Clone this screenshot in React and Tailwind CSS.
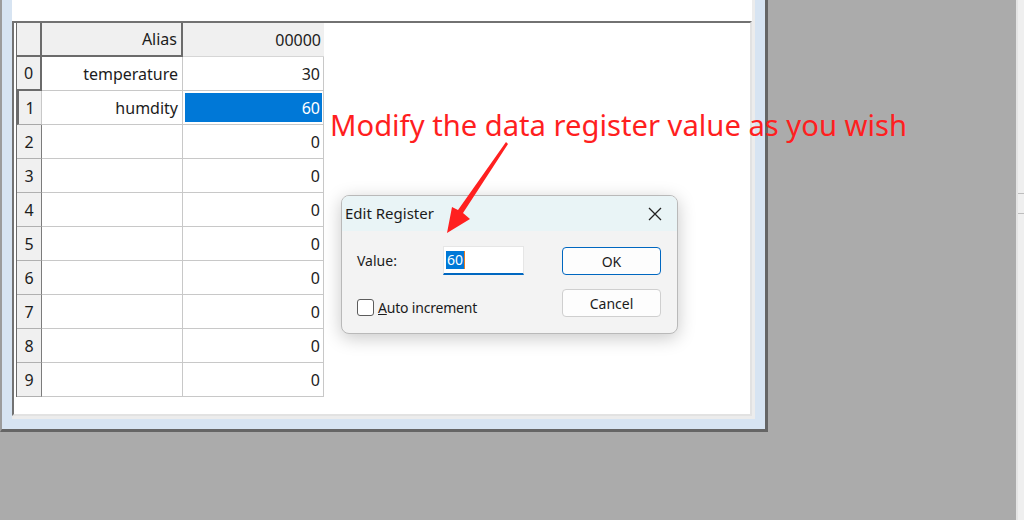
const rows = [
  { alias: "temperature", value: "30" },
  { alias: "humdity", value: "60", selected: true },
  { alias: "", value: "0" },
  { alias: "", value: "0" },
  { alias: "", value: "0" },
  { alias: "", value: "0" },
  { alias: "", value: "0" },
  { alias: "", value: "0" },
  { alias: "", value: "0" },
  { alias: "", value: "0" },
];

function RowHeader({ index }) {
  if (index === 0) {
    return (
      <div className="w-[25px] h-full flex items-center justify-center bg-[#f0f0f0] border-r-2 border-b-2 border-[#6b6b6b]">
        {index}
      </div>
    );
  }
  if (index === 1) {
    return (
      <div className="w-[25px] h-full flex items-center justify-center bg-[#f0f0f0] border-l-2 border-[#6b6b6b] border-r border-r-[#c8c8c8] border-b border-b-[#a8a8a8]">
        {index}
      </div>
    );
  }
  return (
    <div className="w-[25px] h-full flex items-center justify-center bg-[#f0f0f0] border-r border-r-[#7c7c7c] border-b border-b-[#b0b0b0]">
      {index}
    </div>
  );
}

function Grid() {
  return (
    <div className="w-[308px] border-l border-[#6b6b6b] text-[16px] text-[#1c1c1c]">
      <div className="flex h-[34px]">
        <div className="w-[25px] h-full bg-[#f0f0f0] border-r-2 border-b-2 border-[#6b6b6b]" />
        <div className="w-[141px] h-full bg-[#f0f0f0] border-r-2 border-b-2 border-[#6b6b6b] flex items-center justify-end pr-[4px]">
          Alias
        </div>
        <div className="w-[141px] h-full bg-[#f0f0f0] border-b border-[#d6d6d6] flex items-center justify-end pr-[3px]">
          00000
        </div>
      </div>
      {rows.map((r, i) => (
        <div key={i} className="flex h-[34px]">
          <RowHeader index={i} />
          <div className="w-[141px] h-full bg-white border-r border-b border-[#c8c8c8] flex items-center justify-end pr-[4px]">
            {r.alias}
          </div>
          <div
            className={
              r.selected
                ? "w-[141px] h-full border-r border-b border-[#c8c8c8] flex items-center justify-end p-[2px] pr-[1px]"
                : "w-[141px] h-full bg-white border-r border-b border-[#c8c8c8] flex items-center justify-end pr-[3px]"
            }
          >
            {r.selected ? (
              <div className="w-full h-full bg-[#0078d7] text-white flex items-center justify-end pr-[2px]">
                {r.value}
              </div>
            ) : (
              r.value
            )}
          </div>
        </div>
      ))}
    </div>
  );
}

function Dialog() {
  return (
    <div className="absolute left-[341px] top-[195px] w-[337px] h-[139px] rounded-[8px] border border-[#b9b9b9] bg-[#f3f3f3] shadow-[0_4px_18px_rgba(0,0,0,0.22)] overflow-hidden text-[#1b1b1b]">
      <div className="h-[35px] bg-[#e9f4f6] flex items-center justify-between pl-[3px] pr-[14px]">
        <span className="text-[15px]">Edit Register</span>
        <svg width="16" height="16" viewBox="0 0 16 16" className="text-[#222]">
          <path d="M2 2 L14 14 M14 2 L2 14" stroke="currentColor" strokeWidth="1.3" fill="none" />
        </svg>
      </div>
      <div className="flex pl-[15px] pr-[16px] pt-[15px]">
        <div className="flex-1 flex flex-col">
          <div className="flex items-center h-[29px]">
            <span className="w-[86px] text-[14px]">Value:</span>
            <div className="w-[81px] h-[29px] bg-white border border-[#e6e6e6] border-b-2 border-b-[#0067c0] flex items-center pl-[2px]">
              <span className="bg-[#0078d7] text-white text-[14px] leading-[18px] px-[1px]">60</span>
              <span className="w-px h-[18px] bg-[#e87a1e]" />
            </div>
          </div>
          <div className="flex items-center mt-[22px]">
            <div className="w-[17px] h-[17px] rounded-[3px] border border-[#5c5c5c] bg-white" />
            <span className="ml-[4px] text-[14px] tracking-[-0.2px]">
              <span className="underline">A</span>uto increment
            </span>
          </div>
        </div>
        <div className="flex flex-col gap-[14px] pt-[1px]">
          <div className="w-[99px] h-[28px] rounded-[4px] border border-[#0067c0] bg-[#fdfdfd] flex items-center justify-center text-[14px]">
            OK
          </div>
          <div className="w-[99px] h-[28px] rounded-[4px] border border-[#cfcfcf] bg-[#fdfdfd] flex items-center justify-center text-[14px]">
            Cancel
          </div>
        </div>
      </div>
    </div>
  );
}

export default function App() {
  return (
    <div
      className="relative w-[1024px] h-[520px] bg-[#ababab] flex overflow-hidden"
      style={{ fontFamily: '"Noto Sans", "Open Sans", sans-serif' }}
    >
      <div className="w-[768px] h-[432px] bg-[#d7e4f2] border-l-2 border-l-[#9c9c9c] border-r-[3px] border-b-[3px] border-r-[#656565] border-b-[#656565] px-[10px] pb-[10px] flex">
        <div className="flex-1 bg-white flex flex-col border-r-[3px] border-b-[3px] border-[#ececec]">
          <div className="h-[21px] shrink-0" />
          <div className="flex-1 border-t-2 border-l-2 border-[#727272] border-r-2 border-b-2 border-r-[#e2e2e2] border-b-[#e2e2e2] pl-[2px]">
            <Grid />
          </div>
        </div>
      </div>
      <div className="ml-auto w-[8px] h-full border-l-2 border-[#e4e4e4] bg-[#efefef] flex flex-col">
        <div className="h-[193px]" />
        <div className="h-[21px] border-y border-[#bdbdbd]" />
      </div>

      <Dialog />

      <div className="absolute left-[330px] top-[105px] text-[29.2px] leading-[40px] text-[#ff1f1f] whitespace-nowrap">
        Modify the data register value as you wish
      </div>

      <svg className="absolute left-0 top-0" width="1024" height="520" viewBox="0 0 1024 520">
        <polygon
          points="506,142 508,144 463,213 470,219 447,233 452,207 458,210"
          fill="#ff2020"
        />
      </svg>
    </div>
  );
}
